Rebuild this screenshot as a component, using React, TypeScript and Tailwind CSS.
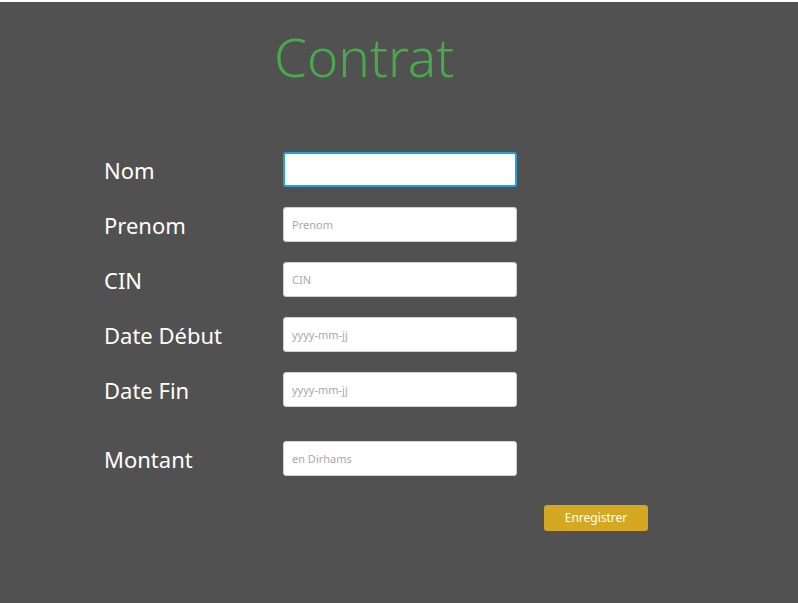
import React from 'react';

const fields = [
    { label: 'Nom', placeholder: '', focused: true },
    { label: 'Prenom', placeholder: 'Prenom' },
    { label: 'CIN', placeholder: 'CIN' },
    { label: 'Date Début', placeholder: 'yyyy-mm-jj' },
    { label: 'Date Fin', placeholder: 'yyyy-mm-jj' },
];

function Row({ label, placeholder, focused }: { label: string; placeholder: string; focused?: boolean }) {
    return (
        <div className="flex items-center h-[35px]">
            <label className="w-[179px] text-white text-[22px] leading-none">{label}</label>
            <input
                type="text"
                placeholder={placeholder}
                className={
                    focused
                        ? 'w-[234px] h-[35px] px-2 bg-white rounded-[3px] border-2 border-[#1fa3d8] outline-none text-xs'
                        : 'w-[234px] h-[35px] px-2 bg-white rounded-[3px] border border-[#cfcfcf] outline-none text-[11px] placeholder:text-[#a9a9a9]'
                }
            />
        </div>
    );
}

export default function App() {
    return (
        <div className="w-[798px] h-[603px] bg-[#505150] border-t-2 border-white font-['Noto_Sans',sans-serif]">
            <h1 className="pl-[274px] pt-[28px] text-[53px] leading-none font-light text-[#48aa4c]">Contrat</h1>
            <form className="pl-[104px] pt-[69px] flex flex-col gap-[20px]">
                {fields.map((f) => (
                    <Row key={f.label} label={f.label} placeholder={f.placeholder} focused={f.focused} />
                ))}
                <div className="mt-[14px]">
                    <Row label="Montant" placeholder="en Dirhams" />
                </div>
                <div className="flex mt-[9px]">
                    <button
                        type="button"
                        className="ml-[440px] w-[104px] h-[26px] bg-[#d4a820] text-white text-xs rounded-[3px]"
                    >
                        Enregistrer
                    </button>
                </div>
            </form>
        </div>
    );
}
